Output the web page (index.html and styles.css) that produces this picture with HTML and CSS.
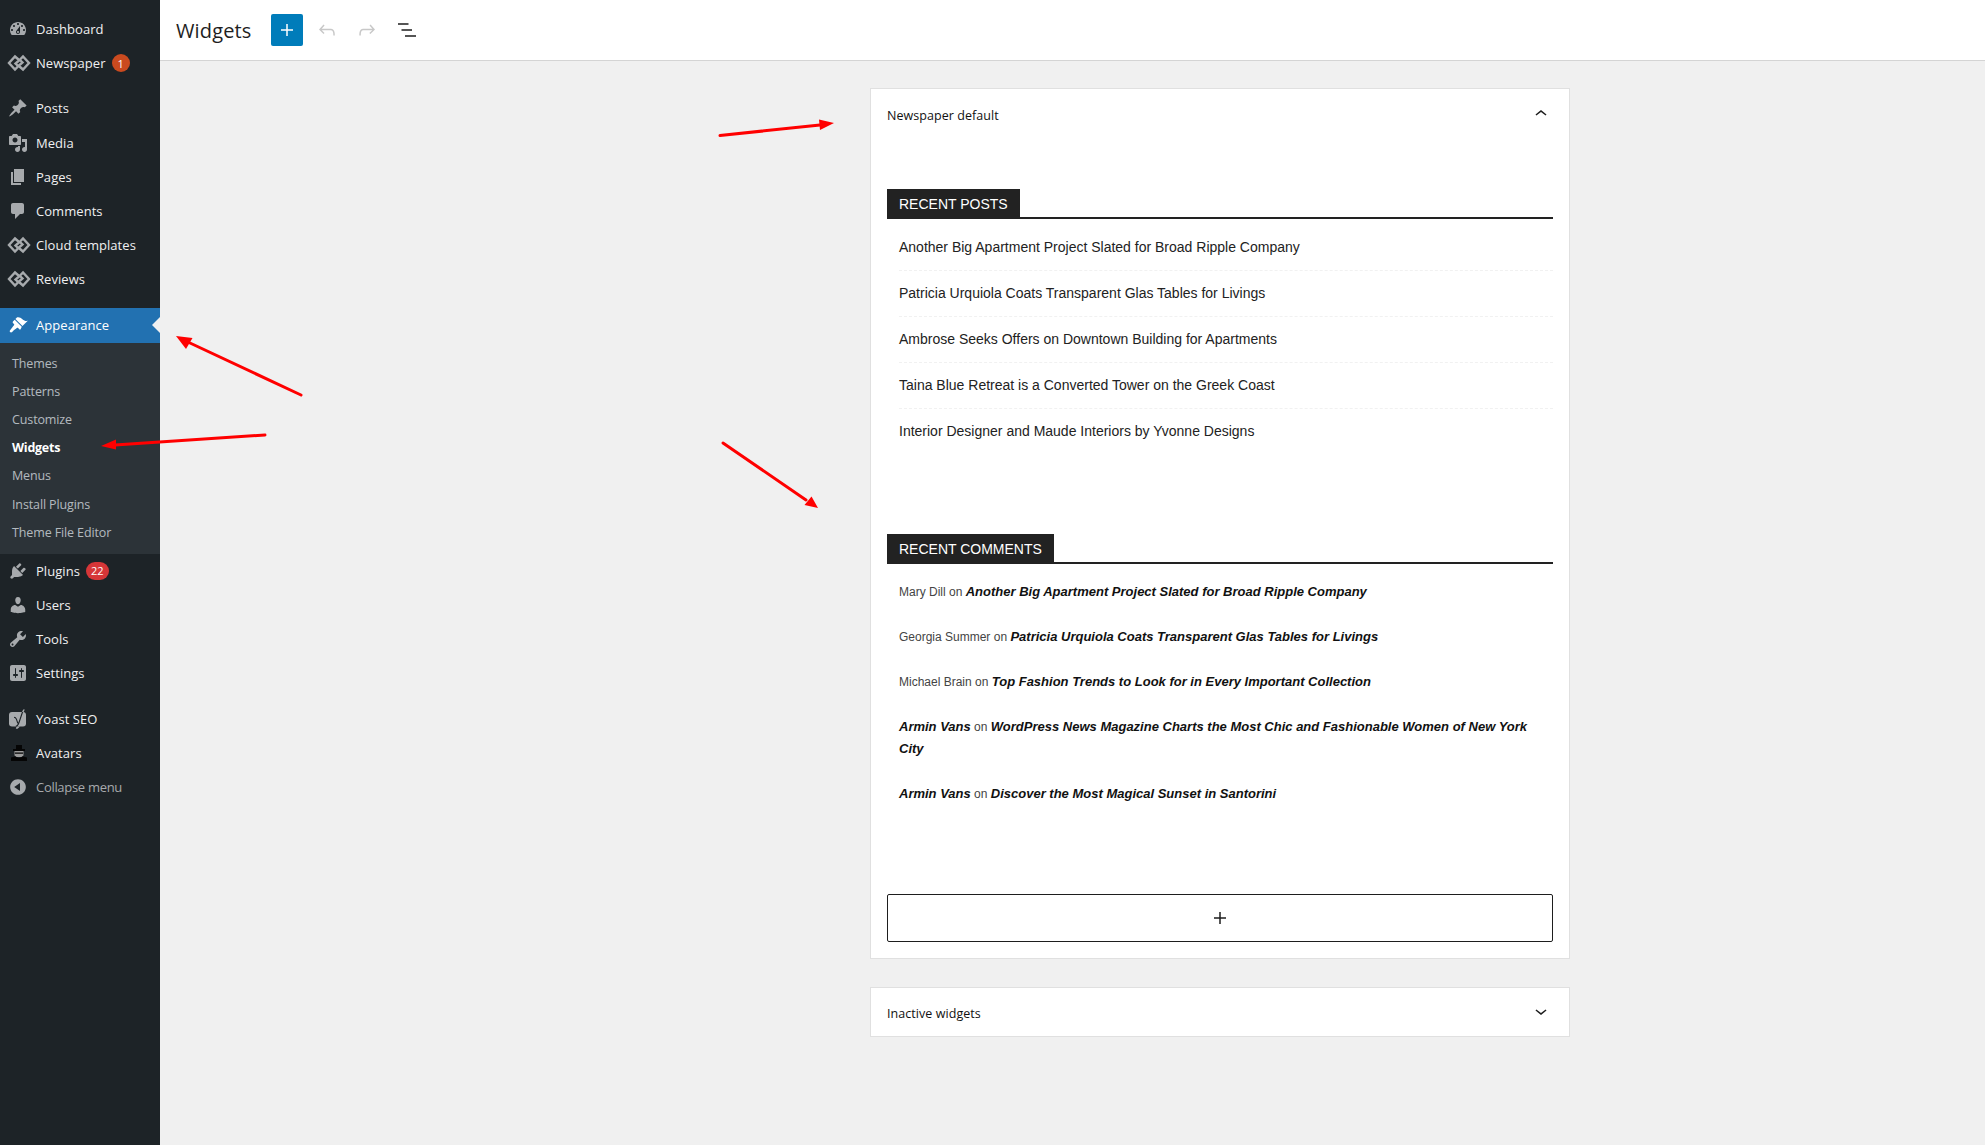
FILE: index.html
```html
<!DOCTYPE html>
<html lang="en">
<head>
<meta charset="utf-8">
<title>Widgets</title>
<link rel="stylesheet" href="styles.css">
</head>
<body>
<svg class="defs" width="0" height="0" aria-hidden="true">
  <defs>
    <symbol id="i-dash" viewBox="0 0 20 20"><path d="M3.76 16h12.48c1.1-1.37 1.76-3.11 1.76-5 0-4.42-3.58-8-8-8s-8 3.58-8 8c0 1.89.66 3.63 1.76 5zM10 4c.55 0 1 .45 1 1s-.45 1-1 1-1-.45-1-1 .45-1 1-1zM6 6c.55 0 1 .45 1 1s-.45 1-1 1-1-.45-1-1 .45-1 1-1zm8 0c.55 0 1 .45 1 1s-.45 1-1 1-1-.45-1-1 .45-1 1-1zm-5.37 5.55L12 7v6c0 1.1-.9 2-2 2s-2-.9-2-2c0-.57.24-1.08.63-1.45zM4 10c.55 0 1 .45 1 1s-.45 1-1 1-1-.45-1-1 .45-1 1-1zm12 0c.55 0 1 .45 1 1s-.45 1-1 1-1-.45-1-1 .45-1 1-1zm-5 3c0-.55-.45-1-1-1s-1 .45-1 1 .45 1 1 1 1-.45 1-1z" fill-rule="evenodd"/></symbol>
    <symbol id="i-np" viewBox="0 0 24 20"><path class="np-line" d="M11.500 6.500 8 3.500 2 10l6 6.500 4-4 3.500-3-2-2M12.500 13.500l3.500 3 6-6.500-6-6.500-4 4-3.500 3 2 2"/></symbol>
    <symbol id="i-pin" viewBox="0 0 20 20"><path d="M10.44 3.02l1.82-1.82 6.36 6.35-1.83 1.82c-1.05-.68-2.48-.57-3.41.36l-.75.75c-.92.93-1.04 2.35-.35 3.41l-1.83 1.82-2.41-2.41-2.8 2.79c-.42.42-3.38 2.71-3.8 2.29s1.86-3.39 2.28-3.81l2.79-2.79L4.1 9.36l1.83-1.82c1.05.69 2.48.57 3.4-.36l.75-.75c.93-.92 1.05-2.35.36-3.41z"/></symbol>
    <symbol id="i-media" viewBox="0 0 20 20"><path fill-rule="evenodd" d="M13 11V4c0-.55-.45-1-1-1h-1.67L9 1H5L3.67 3H2c-.55 0-1 .45-1 1v7c0 .55.45 1 1 1h10c.55 0 1-.45 1-1zM7 4.500c1.380 0 2.500 1.120 2.500 2.500S8.380 9.500 7 9.500 4.500 8.380 4.500 7 5.620 4.500 7 4.500zM14 6h5v10.500c0 1.380-1.120 2.500-2.500 2.500S14 17.880 14 16.500s1.120-2.500 2.500-2.500c.17 0 .34.02.5.05V9h-3V6zm-4 8.050V13h2v3.500c0 1.380-1.120 2.500-2.500 2.500S7 17.880 7 16.500 8.120 14 9.500 14c.17 0 .34.02.5.05z"/></symbol>
    <symbol id="i-page" viewBox="0 0 20 20"><path d="M6 15V2h10v13H6zm-1 1h8v2H3V5h2v11z"/></symbol>
    <symbol id="i-comment" viewBox="0 0 20 20"><path d="M5 2h9c1.1 0 2 .9 2 2v7c0 1.1-.9 2-2 2h-2l-5 5v-5H5c-1.1 0-2-.9-2-2V4c0-1.1.9-2 2-2z"/></symbol>
    <symbol id="i-brush" viewBox="0 0 20 20"><path d="M14.480 11.060L7.410 3.990l1.500-1.500c.5-.56 2.300-.47 3.510.32 1.210.8 1.430 1.280 2.910 2.100 1.180.64 2.450 1.260 4.450.85zm-.71.71L6.700 4.700 4.930 6.470c-.39.39-.39 1.020 0 1.410l1.060 1.060c.39.39.39 1.030 0 1.420-.6.6-2.470 3.270-3.300 4.100-.83.83-1.400 1.770-.6 2.560.79.8 1.730.23 2.560-.6.83-.83 3.500-2.700 4.100-3.300.39-.39 1.030-.39 1.420 0l1.060 1.060c.39.39 1.020.39 1.410 0z"/></symbol>
    <symbol id="i-plug" viewBox="0 0 20 20"><path d="M13.110 4.360L9.870 7.600 8 5.730l3.240-3.240c.35-.34 1.050-.2 1.560.32.52.51.66 1.210.31 1.550zm-8 1.770l.91-1.120 9.010 9.010-1.190.84c-.71.71-2.630 1.160-3.820 1.160H6.140L4.900 17.260c-.59.59-1.540.59-2.120 0-.59-.58-.59-1.530 0-2.120l1.240-1.240v-3.880c0-1.130.4-3.190 1.090-3.890zm7.260 3.970l3.240-3.240c.34-.35 1.040-.21 1.550.31.52.51.66 1.210.31 1.550l-3.240 3.250z"/></symbol>
    <symbol id="i-user" viewBox="0 0 20 20"><path d="M10 9.250c-2.270 0-2.730-3.440-2.730-3.440C7 4.020 7.820 2 9.970 2c2.160 0 2.980 2.020 2.710 3.810 0 0-.41 3.440-2.680 3.440zm0 2.570L12.720 10c2.390 0 4.520 2.330 4.520 4.530v2.490s-3.650 1.130-7.240 1.130c-3.650 0-7.240-1.130-7.240-1.130v-2.490c0-2.250 1.940-4.480 4.470-4.480z"/></symbol>
    <symbol id="i-tool" viewBox="0 0 20 20"><path fill-rule="evenodd" d="M16.680 9.770c-1.340 1.340-3.300 1.670-4.950.99l-5.410 6.520c-.99.99-2.590.99-3.580 0s-.99-2.590 0-3.570l6.520-5.420c-.68-1.650-.35-3.610.99-4.950 1.280-1.280 3.120-1.620 4.720-1.060l-2.890 2.890 2.820 2.820 2.860-2.870c.53 1.580.18 3.390-1.080 4.650zM3.810 16.210c.4.39 1.040.39 1.430 0 .4-.4.4-1.040 0-1.430-.39-.4-1.030-.4-1.430 0-.39.39-.39 1.030 0 1.430z"/></symbol>
    <symbol id="i-settings" viewBox="0 0 20 20"><path fill-rule="evenodd" d="M18 16V4c0-1.100-.9-2-2-2H4c-1.100 0-2 .9-2 2v12c0 1.100.9 2 2 2h12c1.100 0 2-.9 2-2zM8 11h1c.55 0 1 .45 1 1s-.45 1-1 1H8v1.500c0 .28-.22.5-.5.5s-.5-.22-.5-.5V13H6c-.55 0-1-.45-1-1s.45-1 1-1h1V5.500c0-.28.22-.5.5-.5s.5.22.5.5V11zm5-2h-1c-.55 0-1-.45-1-1s.45-1 1-1h1V5.500c0-.28.22-.5.5-.5s.5.22.5.5V7h1c.55 0 1 .45 1 1s-.45 1-1 1h-1v5.500c0 .28-.22.5-.5.5s-.5-.22-.5-.5V9z"/></symbol>
    <symbol id="i-yoast" viewBox="0 0 20 20"><rect class="yo-box" x="1" y="3" width="17" height="14.500" rx="3"/><path class="yo-tail" d="M8.500 17.500 7.800 19.800 9.600 19.800 12 17.500z"/><path class="yo-y" d="M6 8.200c1.300 0 1.900.5 2.400 2l1.400 4M15.200 1 11 13.500c-.6 1.800-1.300 3.600-3.200 3.800"/><path class="yo-top" d="M14 3 15.200 .6 16.800 .6 15.600 3"/></symbol>
    <symbol id="i-collapse" viewBox="0 0 20 20"><path fill-rule="evenodd" d="M10 2.160c4.330 0 7.840 3.510 7.840 7.840s-3.510 7.840-7.840 7.840S2.160 14.330 2.160 10 5.710 2.160 10 2.160zm2 11.720V6.120L6.180 9.970z"/></symbol>
  </defs>
</svg>

<nav class="sidebar">
  <ul class="menu">
    <li class="item"><svg class="icon"><use href="#i-dash"/></svg><span>Dashboard</span></li>
    <li class="item"><svg class="icon wide"><use href="#i-np"/></svg><span>Newspaper</span><b class="badge orange">1</b></li>
    <li class="item gap"><svg class="icon"><use href="#i-pin"/></svg><span>Posts</span></li>
    <li class="item"><svg class="icon"><use href="#i-media"/></svg><span>Media</span></li>
    <li class="item"><svg class="icon"><use href="#i-page"/></svg><span>Pages</span></li>
    <li class="item"><svg class="icon"><use href="#i-comment"/></svg><span>Comments</span></li>
    <li class="item"><svg class="icon wide"><use href="#i-np"/></svg><span>Cloud templates</span></li>
    <li class="item"><svg class="icon wide"><use href="#i-np"/></svg><span>Reviews</span></li>
    <li class="item current"><svg class="icon"><use href="#i-brush"/></svg><span>Appearance</span></li>
    <li class="sub">
      <a>Themes</a><a>Patterns</a><a>Customize</a><a class="on">Widgets</a><a>Menus</a><a>Install Plugins</a><a>Theme File Editor</a>
    </li>
    <li class="item"><svg class="icon"><use href="#i-plug"/></svg><span>Plugins</span><b class="badge red">22</b></li>
    <li class="item"><svg class="icon"><use href="#i-user"/></svg><span>Users</span></li>
    <li class="item"><svg class="icon"><use href="#i-tool"/></svg><span>Tools</span></li>
    <li class="item"><svg class="icon"><use href="#i-settings"/></svg><span>Settings</span></li>
    <li class="item gap"><svg class="icon"><use href="#i-yoast"/></svg><span>Yoast SEO</span></li>
    <li class="item"><svg class="avatar" viewBox="0 0 20 20"><path class="av-hat" d="M8 2h6v4h3v2H5V6h3z"/><path class="av-face" d="M6.500 8h9v4.500l-2 1.500h-5l-2-1.500z"/><path class="av-hat" d="M7 9.500h8v1.200H7zM3 14.500l4-1 4 1.500 4-1.500 4 1v3.500H3z"/></svg><span>Avatars</span></li>
    <li class="item muted"><svg class="icon"><use href="#i-collapse"/></svg><span>Collapse menu</span></li>
  </ul>
</nav>

<div class="main">
  <header class="topbar">
    <h1 class="title">Widgets</h1>
    <button class="add" aria-label="Add block"><svg viewBox="0 0 24 24" width="24" height="24"><path d="M11.250 6h1.500v5.250H18v1.500h-5.250V18h-1.500v-5.250H6v-1.500h5.250z"/></svg></button>
    <svg class="tool dim" viewBox="0 0 24 24" width="24" height="24"><path d="M18.300 11.700c-.6-.6-1.400-.9-2.300-.9H6.700l2.900-3.300-1.100-1-4.500 5L8.500 16l1-1-2.700-2.700H16c.5 0 .9.2 1.300.5 1 1 1 3.400 1 4.500v.3h1.500v-.2c0-1.500 0-4.300-1.500-5.700z"/></svg>
    <svg class="tool dim" viewBox="0 0 24 24" width="24" height="24"><path d="M15.600 6.500l-1.100 1 2.900 3.300H8c-.9 0-1.700.3-2.300.9-1.400 1.500-1.400 4.200-1.400 5.600v.2h1.500v-.3c0-1.100 0-3.500 1-4.500.3-.3.7-.5 1.300-.5h9.200L14.300 15l1.100 1.100 4.600-4.600-4.400-5z"/></svg>
    <svg class="tool" viewBox="0 0 24 24" width="24" height="24"><path d="M3 5.300h10.500v1.500H3zM6.500 11.200H17v1.500H6.500zM10 17.200h11v1.500H10z"/></svg>
  </header>

  <section class="content">
    <div class="panel">
      <div class="panel-head">
        <span class="panel-name">Newspaper default</span>
        <svg class="chev up" viewBox="0 0 24 24" width="24" height="24"><path d="M6.500 12.400 12 8l5.500 4.400-.9 1.200L12 10l-4.600 3.600z"/></svg>
      </div>

      <div class="block first">
        <h4 class="block-title"><span>RECENT POSTS</span></h4>
        <ul class="posts">
          <li>Another Big Apartment Project Slated for Broad Ripple Company</li>
          <li>Patricia Urquiola Coats Transparent Glas Tables for Livings</li>
          <li>Ambrose Seeks Offers on Downtown Building for Apartments</li>
          <li>Taina Blue Retreat is a Converted Tower on the Greek Coast</li>
          <li>Interior Designer and Maude Interiors by Yvonne Designs</li>
        </ul>
      </div>

      <div class="block second">
        <h4 class="block-title"><span>RECENT COMMENTS</span></h4>
        <ul class="comments">
          <li><span class="au">Mary Dill</span> <span class="on-w">on</span> <em>Another Big Apartment Project Slated for Broad Ripple Company</em></li>
          <li><span class="au">Georgia Summer</span> <span class="on-w">on</span> <em>Patricia Urquiola Coats Transparent Glas Tables for Livings</em></li>
          <li><span class="au">Michael Brain</span> <span class="on-w">on</span> <em>Top Fashion Trends to Look for in Every Important Collection</em></li>
          <li><em>Armin Vans</em> <span class="on-w">on</span> <em>WordPress News Magazine Charts the Most Chic and Fashionable Women of New York City</em></li>
          <li><em>Armin Vans</em> <span class="on-w">on</span> <em>Discover the Most Magical Sunset in Santorini</em></li>
        </ul>
      </div>

      <button class="appender" aria-label="Add block"><svg viewBox="0 0 24 24" width="24" height="24"><path d="M11.250 6h1.500v5.250H18v1.500h-5.250V18h-1.500v-5.250H6v-1.500h5.250z"/></svg></button>
    </div>

    <div class="panel closed">
      <div class="panel-head">
        <span class="panel-name">Inactive widgets</span>
        <svg class="chev" viewBox="0 0 24 24" width="24" height="24"><path d="M17.500 11.600 12 16l-5.500-4.400.9-1.200L12 14l4.600-3.600z"/></svg>
      </div>
    </div>
  </section>
</div>

<svg class="arrows" viewBox="0 0 1985 1145" width="1985" height="1145" aria-hidden="true">
  <g class="arrow">
    <path d="M720 135.500 L820 125"/><polygon points="834,123 819,119.500 820,130"/>
    <path d="M301 395 L190 343"/><polygon points="176,336 186,349 192.500,338"/>
    <path d="M265 435 L115 445"/><polygon points="101,446 116,439.500 116,449.500"/>
    <path d="M723 443 L806 500"/><polygon points="818,508 811.500,496.500 804.500,505"/>
  </g>
</svg>
</body>
</html>
```

FILE: styles.css
```css
* { box-sizing: border-box; }
html, body { margin: 0; height: 100%; overflow: hidden; }
body {
  display: flex;
  background: #f0f0f0;
  font-family: "Open Sans", "Noto Sans", sans-serif;
  font-size: 13px;
  color: #1e1e1e;
  position: relative;
}
.defs { position: absolute; }

/* Sidebar */
.sidebar { width: 160px; flex: none; height: 100%; background: #1d2327; padding-top: 12px; }
.menu { list-style: none; margin: 0; padding: 0; }
.item {
  height: 34.2px;
  display: flex;
  align-items: center;
  color: #f0f0f1;
  font-size: 13px;
  letter-spacing: 0.05px;
  padding-left: 8px;
  position: relative;
}
.item.gap { margin-top: 11px; }
.icon { width: 20px; height: 20px; fill: #a7aaad; color: #a7aaad; flex: none; margin-right: 8px; }
.icon.wide { width: 24px; margin-left: -1px; margin-right: 5px; }
.np-line { fill: none; stroke: #a7aaad; stroke-width: 2.4; }
.yo-box, .yo-tail { fill: #a7aaad; }
.yo-y { fill: none; stroke: #1d2327; stroke-width: 1.1; }
.yo-top { fill: #a7aaad; }
.avatar { width: 20px; height: 20px; flex: none; margin-right: 8px; }
.av-hat { fill: #050505; }
.av-face { fill: #9a9a9a; }
.item.muted { color: #a7aaad; letter-spacing: -0.3px; }
.current { background: #2271b1; color: #fff; margin-top: 11px; height: 35.2px; }
.current .icon { fill: #fff; }
.current::after {
  content: "";
  position: absolute;
  right: 0;
  top: 50%;
  margin-top: -8px;
  border: 8px solid transparent;
  border-right-color: #f0f0f1;
  border-left-width: 0;
}
.badge {
  display: inline-flex;
  align-items: center;
  justify-content: center;
  height: 18px;
  min-width: 18px;
  margin-left: 6px;
  padding: 0 5px;
  border-radius: 9px;
  color: #fff;
  font-size: 11px;
  font-weight: 400;
  letter-spacing: 0;
}
.orange { background: #ca4a1f; }
.red { background: #d63638; }
.sub { background: #2c3338; padding: 7px 0 6px; height: 211px; }
.sub a {
  display: block;
  height: 28.2px;
  line-height: 28px;
  padding-left: 12px;
  color: rgba(240, 246, 252, .7);
  font-size: 12.5px;
  letter-spacing: -0.12px;
}
.sub a.on { color: #fff; font-weight: 700; letter-spacing: -0.25px; }

/* Main */
.main { flex: 1; min-width: 0; display: flex; flex-direction: column; }
.topbar {
  height: 61px;
  flex: none;
  background: #fff;
  border-bottom: 1px solid #d4d4d4;
  display: flex;
  align-items: center;
  padding-left: 16px;
}
.title { margin: 0; font-size: 20px; font-weight: 500; letter-spacing: 0.15px; width: 95px; color: #1e1e1e; }
.add {
  width: 32px;
  height: 32px;
  padding: 0;
  border: 0;
  border-radius: 2px;
  background: #007cba;
  display: flex;
  align-items: center;
  justify-content: center;
  margin-right: 12px;
}
.add svg { fill: #fff; }
.tool { fill: #1e1e1e; margin-right: 16px; flex: none; width: 24px; height: 24px; }
.tool.dim { fill: #c8c8c8; }

.content { padding: 27px 0 0 710px; display: flex; flex-direction: column; gap: 28px; }
.panel { width: 700px; background: #fff; border: 1px solid #e0e0e0; padding: 0 16px 16px; }
.panel-head { height: 51px; display: flex; align-items: center; justify-content: space-between; }
.panel-name { font-size: 12.5px; font-weight: 500; letter-spacing: 0.06px; color: #111; padding-top: 2px; }
.chev { fill: #1e1e1e; width: 24px; height: 24px; flex: none; margin-top: -2px; }
.closed { padding-bottom: 0; height: 50px; }
.closed .panel-head { height: 48px; }
.closed .panel-name { padding-top: 3px; }

/* Blocks */
.block { font-family: "Liberation Sans", Arial, sans-serif; }
.first { margin-top: 49px; }
.second { margin-top: 79px; }
.block-title { margin: 0; border-bottom: 2px solid #222; height: 30px; font-weight: 400; font-size: 14px; line-height: 30px; }
.block-title span { display: inline-block; height: 28px; background: #222; color: #fff; padding: 0 12px; vertical-align: top; }
.posts { list-style: none; margin: 6px 0 0; padding: 0 0 0 12px; }
.posts li { height: 46px; line-height: 44px; font-size: 14px; color: #222; border-bottom: 1px dashed #f1f1f1; }
.posts li:last-child { border-bottom: 0; }
.comments { list-style: none; margin: 17px 0 0; padding: 0 12px; line-height: 22px; font-size: 12px; color: #444; }
.comments li { margin-bottom: 23px; }
.comments em { font-style: italic; font-weight: 700; font-size: 13px; color: #111; }
.au, .on-w { font-size: 12px; color: #444; }

.appender {
  display: flex;
  align-items: center;
  justify-content: center;
  width: 100%;
  height: 48px;
  margin-top: 89px;
  padding: 0;
  background: #fff;
  border: 1px solid #1e1e1e;
  border-radius: 2px;
}
.appender svg { fill: #1e1e1e; }

/* Annotation arrows over the screenshot */
.arrows { position: absolute; left: 0; top: 0; pointer-events: none; }
.arrow path { stroke: #f00; stroke-width: 3; fill: none; stroke-linecap: round; }
.arrow polygon { fill: #f00; }
```
